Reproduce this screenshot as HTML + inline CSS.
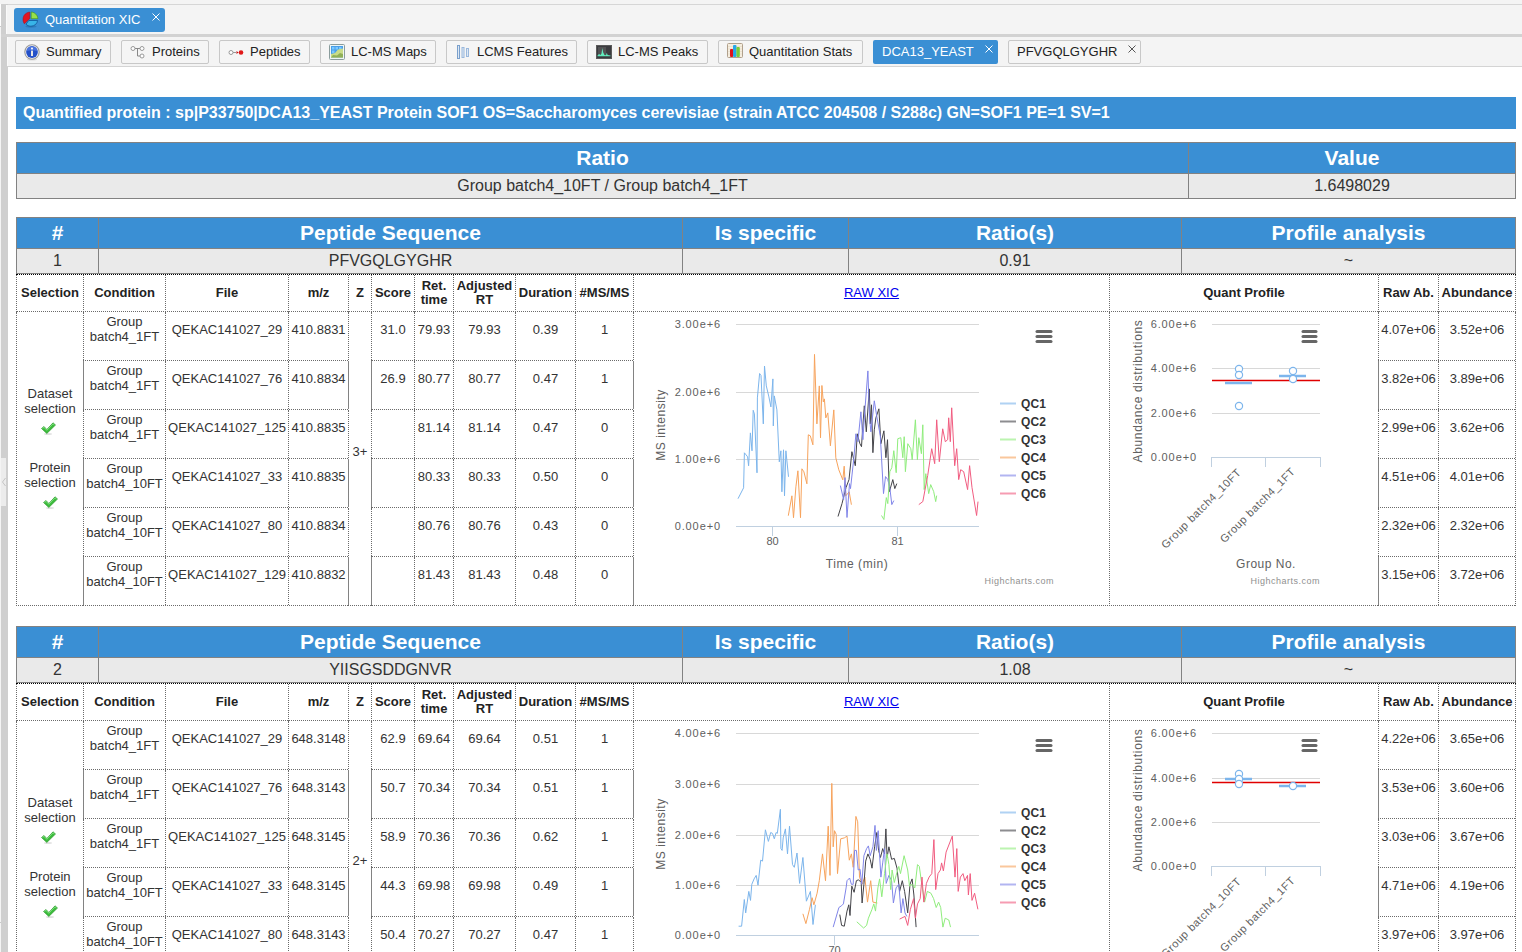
<!DOCTYPE html><html><head><meta charset="utf-8"><style>
html,body{margin:0;padding:0}
body{width:1522px;height:952px;overflow:hidden;position:relative;background:#f4f4f4;font-family:"Liberation Sans", sans-serif;}
.c{position:absolute;display:flex;align-items:center;text-align:center;white-space:nowrap;line-height:1.15}
.t{position:absolute;white-space:nowrap;line-height:1}
</style></head><body>
<div style="position:absolute;left:0px;top:0px;width:1522px;height:4px;background:#f4f4f4"></div>
<div style="position:absolute;left:1px;top:4px;width:1521px;height:1px;background:#d6d6d6"></div>
<div style="position:absolute;left:1px;top:4px;width:7px;height:948px;background:#cfcfcf"></div>
<div style="position:absolute;left:6px;top:5px;width:1516px;height:29px;background:#f4f4f4"></div>
<div style="position:absolute;left:6px;top:5px;width:1px;height:29px;background:#fafafa"></div>
<div style="position:absolute;left:1px;top:34px;width:1521px;height:3px;background:#d2d2d2"></div>
<div style="position:absolute;left:7px;top:37px;width:1515px;height:29px;background:#f4f4f4"></div>
<div style="position:absolute;left:7px;top:37px;width:1px;height:29px;background:#fafafa"></div>
<div style="position:absolute;left:7px;top:66px;width:1515px;height:1px;background:#d4d4d4"></div>
<div style="position:absolute;left:8px;top:67px;width:1514px;height:885px;background:#fff"></div>
<div style="position:absolute;left:0px;top:4px;width:1px;height:22px;background:#fff"></div>
<div style="position:absolute;left:0px;top:26px;width:1px;height:1px;background:#c8c8c8"></div>
<div style="position:absolute;left:0px;top:922px;width:1px;height:1px;background:#c8c8c8"></div>
<div style="position:absolute;left:1px;top:458px;width:5px;height:48px;background:#ececec"></div>
<svg style="position:absolute;left:1px;top:476px" width="6" height="12" viewBox="0 0 6 12"><path d="M4.5 2 L1.5 6 L4.5 10" stroke="#c4c4c4" stroke-width="1" fill="none"/></svg>
<div style="position:absolute;left:14px;top:8px;width:151px;height:24px;background:#3a8fd4;border-radius:3px"></div>
<svg style="position:absolute;left:22px;top:11px" width="17" height="17" viewBox="0 0 17 17">
<ellipse cx="9" cy="15.6" rx="5.5" ry="1.1" fill="#1a5a90" opacity=".35"/>
<path d="M7.7 1 L7.7 7.7 L2.3 12.8 C0.6 10.5 0.6 7 2 4.6 C3.2 2.6 5.3 1.3 7.7 1Z" fill="#e5141f" stroke="#b00010" stroke-width=".5"/>
<path d="M9.2 1 L9.2 7.7 L15.9 7.7 C15.7 4.2 12.8 1.2 9.2 1Z" fill="#98e04a" stroke="#3a9010" stroke-width=".6"/>
<path d="M4 13.2 L6.8 9.5 L15.6 9.5 C15.2 12.8 12.4 15.2 8.9 15.2 C7 15.2 5.2 14.5 4 13.2Z" fill="#38b4e8" stroke="#0a4a90" stroke-width=".7"/>
</svg>
<div class="t" style="left:45px;top:13px;font-size:13px;color:#fff">Quantitation XIC</div>
<svg style="position:absolute;left:151px;top:12px" width="10" height="10" viewBox="0 0 10 10"><path d="M1.5 1.5 L8.5 8.5 M8.5 1.5 L1.5 8.5" stroke="#fff" stroke-width="1"/></svg>
<div style="position:absolute;left:15px;top:40px;width:96px;height:24px;box-sizing:border-box;background:#f5f5f5;border:1px solid #c8c8c8;border-radius:2px"></div>
<svg style="position:absolute;left:24px;top:44px" width="16" height="17" viewBox="0 0 16 17"><ellipse cx="8" cy="15.5" rx="5" ry="1" fill="#000" opacity=".1"/><circle cx="8" cy="8" r="7.2" fill="#f8f8f8" stroke="#999" stroke-width="1.1"/><circle cx="8" cy="8" r="5.9" fill="#2450c8"/><path d="M2.6 7 A5.5 5.5 0 0 1 13.4 7 Q8 5.5 2.6 7Z" fill="#6a90f0" opacity=".55"/><rect x="7.1" y="3.6" width="1.8" height="1.8" fill="#fff"/><rect x="7.1" y="6.6" width="1.8" height="5.4" fill="#fff8e8"/></svg>
<div class="t" style="left:46px;top:45px;font-size:13px;color:#222">Summary</div>
<div style="position:absolute;left:121px;top:40px;width:88px;height:24px;box-sizing:border-box;background:#f5f5f5;border:1px solid #c8c8c8;border-radius:2px"></div>
<svg style="position:absolute;left:130px;top:44px" width="16" height="16" viewBox="0 0 16 16"><path d="M3.5 4.5 H11 M7.5 4.5 V12 H11" stroke="#888" stroke-width="1" fill="none"/><circle cx="3" cy="4.5" r="2" fill="#fff" stroke="#999"/><circle cx="12" cy="4.5" r="2" fill="#fff" stroke="#999"/><circle cx="12" cy="12" r="2" fill="#fff" stroke="#999"/></svg>
<div class="t" style="left:152px;top:45px;font-size:13px;color:#222">Proteins</div>
<div style="position:absolute;left:219px;top:40px;width:91px;height:24px;box-sizing:border-box;background:#f5f5f5;border:1px solid #c8c8c8;border-radius:2px"></div>
<svg style="position:absolute;left:228px;top:44px" width="16" height="16" viewBox="0 0 16 16"><circle cx="3" cy="8.5" r="2" fill="#fff" stroke="#999"/><path d="M5 8.5 H8" stroke="#999"/><path d="M8.5 7 L10.5 8.5 L8.5 10 Z" fill="#c01010"/><circle cx="13" cy="8.5" r="2.3" fill="#e01818"/></svg>
<div class="t" style="left:250px;top:45px;font-size:13px;color:#222">Peptides</div>
<div style="position:absolute;left:320px;top:40px;width:116px;height:24px;box-sizing:border-box;background:#f5f5f5;border:1px solid #c8c8c8;border-radius:2px"></div>
<svg style="position:absolute;left:329px;top:44px" width="16" height="16" viewBox="0 0 16 16"><rect x="0.5" y="0.5" width="15" height="15" rx="1" fill="#eef6f6" stroke="#8a9c9c" stroke-width="1"/><rect x="2" y="2" width="12" height="11.5" fill="#4a9ee8"/><rect x="3" y="3" width="2.5" height="2.5" fill="#78c8ff"/><rect x="6.5" y="3" width="2.5" height="2.5" fill="#78c8ff"/><rect x="10" y="3" width="2.5" height="2.5" fill="#78c8ff"/><rect x="3" y="6.5" width="2.5" height="2.5" fill="#78c8ff"/><path d="M2 13.5 L2 10 L6 9 L9 5.5 L14 4.5 L14 13.5Z" fill="#c8dc88"/><path d="M2 13.5 L4 11 L8 11.5 L11 9 L14 10 L14 13.5Z" fill="#90b058"/></svg>
<div class="t" style="left:351px;top:45px;font-size:13px;color:#222">LC-MS Maps</div>
<div style="position:absolute;left:446px;top:40px;width:131px;height:24px;box-sizing:border-box;background:#f5f5f5;border:1px solid #c8c8c8;border-radius:2px"></div>
<svg style="position:absolute;left:455px;top:44px" width="16" height="16" viewBox="0 0 16 16"><rect x="2.5" y="1.5" width="2" height="13" fill="#dde8f4" stroke="#7aa0cc"/><rect x="7" y="3.5" width="2" height="10" fill="#dde8f4" stroke="#9ab8dc"/><rect x="11.5" y="4.5" width="2" height="8" fill="#dde8f4" stroke="#9ab8dc"/></svg>
<div class="t" style="left:477px;top:45px;font-size:13px;color:#222">LCMS Features</div>
<div style="position:absolute;left:587px;top:40px;width:121px;height:24px;box-sizing:border-box;background:#f5f5f5;border:1px solid #c8c8c8;border-radius:2px"></div>
<svg style="position:absolute;left:596px;top:45px" width="17" height="15" viewBox="0 0 17 15"><rect x="0.5" y="0.5" width="15" height="13" fill="#3c3c40" stroke="#5a5a5a" stroke-width="1"/><rect x="2" y="2" width="8" height="9" fill="#6a6a6a" opacity=".5"/><path d="M1.5 10.5 L3 9 L4.5 10 L5.5 8.5 L6.3 3 L7.2 7.5 L8.5 10 L10 10.2 L10.8 7.8 L11.6 10 L14.5 10.5 L14.5 11.3 L1.5 11.3Z" fill="#62eebf"/></svg>
<div class="t" style="left:618px;top:45px;font-size:13px;color:#222">LC-MS Peaks</div>
<div style="position:absolute;left:718px;top:40px;width:145px;height:24px;box-sizing:border-box;background:#f5f5f5;border:1px solid #c8c8c8;border-radius:2px"></div>
<svg style="position:absolute;left:727px;top:43px" width="17" height="16" viewBox="0 0 17 16"><rect x="0.5" y="0.5" width="15" height="14" rx="1" fill="#f6eee0" stroke="#b0a08c" stroke-width="1"/><path d="M1 3.5H15M1 6H15M1 8.5H15M1 11H15" stroke="#e6dcc8" stroke-width=".7"/><rect x="3" y="6" width="3.2" height="8" rx="1" fill="#e0101a"/><rect x="6" y="2" width="3.5" height="12" rx="1" fill="#28a8e8"/><rect x="9.4" y="4" width="3.4" height="10" rx="1" fill="#78cc38"/></svg>
<div class="t" style="left:749px;top:45px;font-size:13px;color:#222">Quantitation Stats</div>
<div style="position:absolute;left:873px;top:40px;width:125px;height:24px;box-sizing:border-box;background:#3a8fd4;border-radius:2px"></div>
<div class="t" style="left:882px;top:45px;font-size:13px;color:#fff">DCA13_YEAST</div>
<svg style="position:absolute;left:984px;top:44px" width="10" height="10" viewBox="0 0 10 10"><path d="M1.5 1.5 L8.5 8.5 M8.5 1.5 L1.5 8.5" stroke="#fff" stroke-width="1"/></svg>
<div style="position:absolute;left:1008px;top:40px;width:133px;height:24px;box-sizing:border-box;background:#f5f5f5;border:1px solid #c8c8c8;border-radius:2px"></div>
<div class="t" style="left:1017px;top:45px;font-size:13px;color:#222">PFVGQLGYGHR</div>
<svg style="position:absolute;left:1127px;top:44px" width="10" height="10" viewBox="0 0 10 10"><path d="M1.5 1.5 L8.5 8.5 M8.5 1.5 L1.5 8.5" stroke="#555" stroke-width="1"/></svg>
<div style="position:absolute;left:16px;top:97px;width:1500px;height:32px;background:#3a8fd4"></div>
<div class="t" style="left:23px;top:105px;font-size:16px;font-weight:bold;color:#fff">Quantified protein : sp|P33750|DCA13_YEAST Protein SOF1 OS=Saccharomyces cerevisiae (strain ATCC 204508 / S288c) GN=SOF1 PE=1 SV=1</div>
<div style="position:absolute;left:16px;top:142px;width:1500px;height:31px;background:#3a8fd4"></div>
<div style="position:absolute;left:16px;top:173px;width:1500px;height:25px;background:#eaeaea"></div>
<div style="position:absolute;left:16px;top:142px;width:1500px;height:1px;background:#828282"></div>
<div style="position:absolute;left:16px;top:173px;width:1500px;height:1px;background:#828282"></div>
<div style="position:absolute;left:16px;top:198px;width:1500px;height:1px;background:#828282"></div>
<div style="position:absolute;left:16px;top:142px;width:1px;height:57px;background:#828282"></div>
<div style="position:absolute;left:1188px;top:142px;width:1px;height:57px;background:#828282"></div>
<div style="position:absolute;left:1515px;top:142px;width:1px;height:57px;background:#828282"></div>
<div class="c" style="left:17px;top:143px;width:1171px;height:30px;justify-content:center;font-size:21px;font-weight:bold;color:#fff">Ratio</div>
<div class="c" style="left:17px;top:174px;width:1171px;height:24px;justify-content:center;font-size:16px;color:#333">Group batch4_10FT / Group batch4_1FT</div>
<div class="c" style="left:1189px;top:143px;width:326px;height:30px;justify-content:center;font-size:21px;font-weight:bold;color:#fff">Value</div>
<div class="c" style="left:1189px;top:174px;width:326px;height:24px;justify-content:center;font-size:16px;color:#333">1.6498029</div>
<div style="position:absolute;left:16px;top:217px;width:1500px;height:31px;background:#3a8fd4"></div>
<div style="position:absolute;left:16px;top:248px;width:1500px;height:25px;background:#eaeaea"></div>
<div style="position:absolute;left:16px;top:217px;width:1500px;height:1px;background:#828282"></div>
<div style="position:absolute;left:16px;top:248px;width:1500px;height:1px;background:#828282"></div>
<div style="position:absolute;left:16px;top:273px;width:1500px;height:1px;background:#828282"></div>
<div style="position:absolute;left:16px;top:217px;width:1px;height:57px;background:#828282"></div>
<div style="position:absolute;left:98px;top:217px;width:1px;height:57px;background:#828282"></div>
<div style="position:absolute;left:682px;top:217px;width:1px;height:57px;background:#828282"></div>
<div style="position:absolute;left:848px;top:217px;width:1px;height:57px;background:#828282"></div>
<div style="position:absolute;left:1181px;top:217px;width:1px;height:57px;background:#828282"></div>
<div style="position:absolute;left:1515px;top:217px;width:1px;height:57px;background:#828282"></div>
<div class="c" style="left:17px;top:218px;width:81px;height:30px;justify-content:center;font-size:21px;font-weight:bold;color:#fff">#</div>
<div class="c" style="left:17px;top:249px;width:81px;height:24px;justify-content:center;font-size:16px;color:#333">1</div>
<div class="c" style="left:99px;top:218px;width:583px;height:30px;justify-content:center;font-size:21px;font-weight:bold;color:#fff">Peptide Sequence</div>
<div class="c" style="left:99px;top:249px;width:583px;height:24px;justify-content:center;font-size:16px;color:#333">PFVGQLGYGHR</div>
<div class="c" style="left:683px;top:218px;width:165px;height:30px;justify-content:center;font-size:21px;font-weight:bold;color:#fff">Is specific</div>
<div class="c" style="left:683px;top:249px;width:165px;height:24px;justify-content:center;font-size:16px;color:#333"></div>
<div class="c" style="left:849px;top:218px;width:332px;height:30px;justify-content:center;font-size:21px;font-weight:bold;color:#fff">Ratio(s)</div>
<div class="c" style="left:849px;top:249px;width:332px;height:24px;justify-content:center;font-size:16px;color:#333">0.91</div>
<div class="c" style="left:1182px;top:218px;width:333px;height:30px;justify-content:center;font-size:21px;font-weight:bold;color:#fff">Profile analysis</div>
<div class="c" style="left:1182px;top:249px;width:333px;height:24px;justify-content:center;font-size:16px;color:#333">~</div>
<div style="position:absolute;left:16px;top:274px;width:1500px;height:0;border-top:1px dotted #000"></div>
<div class="c" style="left:17px;top:275px;width:66px;height:36px;justify-content:center;font-size:13px;font-weight:bold;color:#222;line-height:14px">Selection</div>
<div class="c" style="left:84px;top:275px;width:81px;height:36px;justify-content:center;font-size:13px;font-weight:bold;color:#222;line-height:14px">Condition</div>
<div class="c" style="left:166px;top:275px;width:122px;height:36px;justify-content:center;font-size:13px;font-weight:bold;color:#222;line-height:14px">File</div>
<div class="c" style="left:289px;top:275px;width:59px;height:36px;justify-content:center;font-size:13px;font-weight:bold;color:#222;line-height:14px">m/z</div>
<div class="c" style="left:349px;top:275px;width:22px;height:36px;justify-content:center;font-size:13px;font-weight:bold;color:#222;line-height:14px">Z</div>
<div class="c" style="left:372px;top:275px;width:42px;height:36px;justify-content:center;font-size:13px;font-weight:bold;color:#222;line-height:14px">Score</div>
<div class="c" style="left:415px;top:275px;width:38px;height:36px;justify-content:center;font-size:13px;font-weight:bold;color:#222;line-height:14px">Ret.<br>time</div>
<div class="c" style="left:454px;top:275px;width:61px;height:36px;justify-content:center;font-size:13px;font-weight:bold;color:#222;line-height:14px">Adjusted<br>RT</div>
<div class="c" style="left:516px;top:275px;width:59px;height:36px;justify-content:center;font-size:13px;font-weight:bold;color:#222;line-height:14px">Duration</div>
<div class="c" style="left:576px;top:275px;width:57px;height:36px;justify-content:center;font-size:13px;font-weight:bold;color:#222;line-height:14px">#MS/MS</div>
<div class="c" style="left:634px;top:275px;width:475px;height:36px;justify-content:center;font-size:13px;font-weight:bold;color:#222;line-height:14px"><span style="color:#0000ee;text-decoration:underline;font-weight:normal">RAW XIC</span></div>
<div class="c" style="left:1110px;top:275px;width:268px;height:36px;justify-content:center;font-size:13px;font-weight:bold;color:#222;line-height:14px">Quant Profile</div>
<div class="c" style="left:1379px;top:275px;width:59px;height:36px;justify-content:center;font-size:13px;font-weight:bold;color:#222;line-height:14px">Raw Ab.</div>
<div class="c" style="left:1439px;top:275px;width:76px;height:36px;justify-content:center;font-size:13px;font-weight:bold;color:#222;line-height:14px">Abundance</div>
<div style="position:absolute;left:16px;top:275px;width:0;height:37px;border-left:1px dotted #6a6a6a"></div>
<div style="position:absolute;left:83px;top:275px;width:0;height:37px;border-left:1px dotted #6a6a6a"></div>
<div style="position:absolute;left:165px;top:275px;width:0;height:37px;border-left:1px dotted #6a6a6a"></div>
<div style="position:absolute;left:288px;top:275px;width:0;height:37px;border-left:1px dotted #6a6a6a"></div>
<div style="position:absolute;left:348px;top:275px;width:0;height:37px;border-left:1px dotted #6a6a6a"></div>
<div style="position:absolute;left:371px;top:275px;width:0;height:37px;border-left:1px dotted #6a6a6a"></div>
<div style="position:absolute;left:414px;top:275px;width:0;height:37px;border-left:1px dotted #6a6a6a"></div>
<div style="position:absolute;left:453px;top:275px;width:0;height:37px;border-left:1px dotted #6a6a6a"></div>
<div style="position:absolute;left:515px;top:275px;width:0;height:37px;border-left:1px dotted #6a6a6a"></div>
<div style="position:absolute;left:575px;top:275px;width:0;height:37px;border-left:1px dotted #6a6a6a"></div>
<div style="position:absolute;left:633px;top:275px;width:0;height:37px;border-left:1px dotted #6a6a6a"></div>
<div style="position:absolute;left:1109px;top:275px;width:0;height:37px;border-left:1px dotted #6a6a6a"></div>
<div style="position:absolute;left:1378px;top:275px;width:0;height:37px;border-left:1px dotted #6a6a6a"></div>
<div style="position:absolute;left:1438px;top:275px;width:0;height:37px;border-left:1px dotted #6a6a6a"></div>
<div style="position:absolute;left:1515px;top:275px;width:0;height:37px;border-left:1px dotted #6a6a6a"></div>
<div style="position:absolute;left:16px;top:311px;width:1500px;height:0;border-top:1px dotted #6a6a6a"></div>
<div class="c" style="left:84px;top:311px;width:81px;height:36px;justify-content:center;font-size:13px;color:#333;line-height:15px">Group<br>batch4_1FT</div>
<div class="c" style="left:166px;top:311px;width:122px;height:36px;justify-content:center;font-size:13px;color:#333;line-height:15px">QEKAC141027_29</div>
<div class="c" style="left:289px;top:311px;width:59px;height:36px;justify-content:center;font-size:13px;color:#333;line-height:15px">410.8831</div>
<div class="c" style="left:372px;top:311px;width:42px;height:36px;justify-content:center;font-size:13px;color:#333;line-height:15px">31.0</div>
<div class="c" style="left:415px;top:311px;width:38px;height:36px;justify-content:center;font-size:13px;color:#333;line-height:15px">79.93</div>
<div class="c" style="left:454px;top:311px;width:61px;height:36px;justify-content:center;font-size:13px;color:#333;line-height:15px">79.93</div>
<div class="c" style="left:516px;top:311px;width:59px;height:36px;justify-content:center;font-size:13px;color:#333;line-height:15px">0.39</div>
<div class="c" style="left:576px;top:311px;width:57px;height:36px;justify-content:center;font-size:13px;color:#333;line-height:15px">1</div>
<div class="c" style="left:1379px;top:311px;width:59px;height:36px;justify-content:center;font-size:13px;color:#333;line-height:15px">4.07e+06</div>
<div class="c" style="left:1439px;top:311px;width:76px;height:36px;justify-content:center;font-size:13px;color:#333;line-height:15px">3.52e+06</div>
<div style="position:absolute;left:83px;top:360px;width:265px;height:0;border-top:1px dotted #6a6a6a"></div>
<div style="position:absolute;left:371px;top:360px;width:262px;height:0;border-top:1px dotted #6a6a6a"></div>
<div style="position:absolute;left:1378px;top:360px;width:137px;height:0;border-top:1px dotted #6a6a6a"></div>
<div style="position:absolute;left:83px;top:312px;width:0;height:48px;border-left:1px dotted #6a6a6a"></div>
<div style="position:absolute;left:348px;top:312px;width:0;height:48px;border-left:1px dotted #6a6a6a"></div>
<div style="position:absolute;left:371px;top:312px;width:0;height:48px;border-left:1px dotted #6a6a6a"></div>
<div style="position:absolute;left:633px;top:312px;width:0;height:48px;border-left:1px dotted #6a6a6a"></div>
<div style="position:absolute;left:1378px;top:312px;width:0;height:48px;border-left:1px dotted #6a6a6a"></div>
<div style="position:absolute;left:165px;top:312px;width:0;height:48px;border-left:1px dotted #6a6a6a"></div>
<div style="position:absolute;left:288px;top:312px;width:0;height:48px;border-left:1px dotted #6a6a6a"></div>
<div style="position:absolute;left:414px;top:312px;width:0;height:48px;border-left:1px dotted #6a6a6a"></div>
<div style="position:absolute;left:453px;top:312px;width:0;height:48px;border-left:1px dotted #6a6a6a"></div>
<div style="position:absolute;left:515px;top:312px;width:0;height:48px;border-left:1px dotted #6a6a6a"></div>
<div style="position:absolute;left:575px;top:312px;width:0;height:48px;border-left:1px dotted #6a6a6a"></div>
<div style="position:absolute;left:1438px;top:312px;width:0;height:48px;border-left:1px dotted #6a6a6a"></div>
<div class="c" style="left:84px;top:360px;width:81px;height:36px;justify-content:center;font-size:13px;color:#333;line-height:15px">Group<br>batch4_1FT</div>
<div class="c" style="left:166px;top:360px;width:122px;height:36px;justify-content:center;font-size:13px;color:#333;line-height:15px">QEKAC141027_76</div>
<div class="c" style="left:289px;top:360px;width:59px;height:36px;justify-content:center;font-size:13px;color:#333;line-height:15px">410.8834</div>
<div class="c" style="left:372px;top:360px;width:42px;height:36px;justify-content:center;font-size:13px;color:#333;line-height:15px">26.9</div>
<div class="c" style="left:415px;top:360px;width:38px;height:36px;justify-content:center;font-size:13px;color:#333;line-height:15px">80.77</div>
<div class="c" style="left:454px;top:360px;width:61px;height:36px;justify-content:center;font-size:13px;color:#333;line-height:15px">80.77</div>
<div class="c" style="left:516px;top:360px;width:59px;height:36px;justify-content:center;font-size:13px;color:#333;line-height:15px">0.47</div>
<div class="c" style="left:576px;top:360px;width:57px;height:36px;justify-content:center;font-size:13px;color:#333;line-height:15px">1</div>
<div class="c" style="left:1379px;top:360px;width:59px;height:36px;justify-content:center;font-size:13px;color:#333;line-height:15px">3.82e+06</div>
<div class="c" style="left:1439px;top:360px;width:76px;height:36px;justify-content:center;font-size:13px;color:#333;line-height:15px">3.89e+06</div>
<div style="position:absolute;left:83px;top:409px;width:265px;height:0;border-top:1px dotted #6a6a6a"></div>
<div style="position:absolute;left:371px;top:409px;width:262px;height:0;border-top:1px dotted #6a6a6a"></div>
<div style="position:absolute;left:1378px;top:409px;width:137px;height:0;border-top:1px dotted #6a6a6a"></div>
<div style="position:absolute;left:83px;top:361px;width:1px;height:48px;background:#828282"></div>
<div style="position:absolute;left:348px;top:361px;width:1px;height:48px;background:#828282"></div>
<div style="position:absolute;left:371px;top:361px;width:1px;height:48px;background:#828282"></div>
<div style="position:absolute;left:633px;top:361px;width:1px;height:48px;background:#828282"></div>
<div style="position:absolute;left:1378px;top:361px;width:1px;height:48px;background:#828282"></div>
<div style="position:absolute;left:165px;top:361px;width:0;height:48px;border-left:1px dotted #6a6a6a"></div>
<div style="position:absolute;left:288px;top:361px;width:0;height:48px;border-left:1px dotted #6a6a6a"></div>
<div style="position:absolute;left:414px;top:361px;width:0;height:48px;border-left:1px dotted #6a6a6a"></div>
<div style="position:absolute;left:453px;top:361px;width:0;height:48px;border-left:1px dotted #6a6a6a"></div>
<div style="position:absolute;left:515px;top:361px;width:0;height:48px;border-left:1px dotted #6a6a6a"></div>
<div style="position:absolute;left:575px;top:361px;width:0;height:48px;border-left:1px dotted #6a6a6a"></div>
<div style="position:absolute;left:1438px;top:361px;width:0;height:48px;border-left:1px dotted #6a6a6a"></div>
<div class="c" style="left:84px;top:409px;width:81px;height:36px;justify-content:center;font-size:13px;color:#333;line-height:15px">Group<br>batch4_1FT</div>
<div class="c" style="left:166px;top:409px;width:122px;height:36px;justify-content:center;font-size:13px;color:#333;line-height:15px">QEKAC141027_125</div>
<div class="c" style="left:289px;top:409px;width:59px;height:36px;justify-content:center;font-size:13px;color:#333;line-height:15px">410.8835</div>
<div class="c" style="left:372px;top:409px;width:42px;height:36px;justify-content:center;font-size:13px;color:#333;line-height:15px"></div>
<div class="c" style="left:415px;top:409px;width:38px;height:36px;justify-content:center;font-size:13px;color:#333;line-height:15px">81.14</div>
<div class="c" style="left:454px;top:409px;width:61px;height:36px;justify-content:center;font-size:13px;color:#333;line-height:15px">81.14</div>
<div class="c" style="left:516px;top:409px;width:59px;height:36px;justify-content:center;font-size:13px;color:#333;line-height:15px">0.47</div>
<div class="c" style="left:576px;top:409px;width:57px;height:36px;justify-content:center;font-size:13px;color:#333;line-height:15px">0</div>
<div class="c" style="left:1379px;top:409px;width:59px;height:36px;justify-content:center;font-size:13px;color:#333;line-height:15px">2.99e+06</div>
<div class="c" style="left:1439px;top:409px;width:76px;height:36px;justify-content:center;font-size:13px;color:#333;line-height:15px">3.62e+06</div>
<div style="position:absolute;left:83px;top:458px;width:265px;height:0;border-top:1px dotted #6a6a6a"></div>
<div style="position:absolute;left:371px;top:458px;width:262px;height:0;border-top:1px dotted #6a6a6a"></div>
<div style="position:absolute;left:1378px;top:458px;width:137px;height:0;border-top:1px dotted #6a6a6a"></div>
<div style="position:absolute;left:83px;top:410px;width:0;height:48px;border-left:1px dotted #6a6a6a"></div>
<div style="position:absolute;left:348px;top:410px;width:0;height:48px;border-left:1px dotted #6a6a6a"></div>
<div style="position:absolute;left:371px;top:410px;width:0;height:48px;border-left:1px dotted #6a6a6a"></div>
<div style="position:absolute;left:633px;top:410px;width:0;height:48px;border-left:1px dotted #6a6a6a"></div>
<div style="position:absolute;left:1378px;top:410px;width:0;height:48px;border-left:1px dotted #6a6a6a"></div>
<div style="position:absolute;left:165px;top:410px;width:0;height:48px;border-left:1px dotted #6a6a6a"></div>
<div style="position:absolute;left:288px;top:410px;width:0;height:48px;border-left:1px dotted #6a6a6a"></div>
<div style="position:absolute;left:414px;top:410px;width:0;height:48px;border-left:1px dotted #6a6a6a"></div>
<div style="position:absolute;left:453px;top:410px;width:0;height:48px;border-left:1px dotted #6a6a6a"></div>
<div style="position:absolute;left:515px;top:410px;width:0;height:48px;border-left:1px dotted #6a6a6a"></div>
<div style="position:absolute;left:575px;top:410px;width:0;height:48px;border-left:1px dotted #6a6a6a"></div>
<div style="position:absolute;left:1438px;top:410px;width:0;height:48px;border-left:1px dotted #6a6a6a"></div>
<div class="c" style="left:84px;top:458px;width:81px;height:36px;justify-content:center;font-size:13px;color:#333;line-height:15px">Group<br>batch4_10FT</div>
<div class="c" style="left:166px;top:458px;width:122px;height:36px;justify-content:center;font-size:13px;color:#333;line-height:15px">QEKAC141027_33</div>
<div class="c" style="left:289px;top:458px;width:59px;height:36px;justify-content:center;font-size:13px;color:#333;line-height:15px">410.8835</div>
<div class="c" style="left:372px;top:458px;width:42px;height:36px;justify-content:center;font-size:13px;color:#333;line-height:15px"></div>
<div class="c" style="left:415px;top:458px;width:38px;height:36px;justify-content:center;font-size:13px;color:#333;line-height:15px">80.33</div>
<div class="c" style="left:454px;top:458px;width:61px;height:36px;justify-content:center;font-size:13px;color:#333;line-height:15px">80.33</div>
<div class="c" style="left:516px;top:458px;width:59px;height:36px;justify-content:center;font-size:13px;color:#333;line-height:15px">0.50</div>
<div class="c" style="left:576px;top:458px;width:57px;height:36px;justify-content:center;font-size:13px;color:#333;line-height:15px">0</div>
<div class="c" style="left:1379px;top:458px;width:59px;height:36px;justify-content:center;font-size:13px;color:#333;line-height:15px">4.51e+06</div>
<div class="c" style="left:1439px;top:458px;width:76px;height:36px;justify-content:center;font-size:13px;color:#333;line-height:15px">4.01e+06</div>
<div style="position:absolute;left:83px;top:507px;width:265px;height:0;border-top:1px dotted #6a6a6a"></div>
<div style="position:absolute;left:371px;top:507px;width:262px;height:0;border-top:1px dotted #6a6a6a"></div>
<div style="position:absolute;left:1378px;top:507px;width:137px;height:0;border-top:1px dotted #6a6a6a"></div>
<div style="position:absolute;left:83px;top:459px;width:1px;height:48px;background:#828282"></div>
<div style="position:absolute;left:348px;top:459px;width:1px;height:48px;background:#828282"></div>
<div style="position:absolute;left:371px;top:459px;width:1px;height:48px;background:#828282"></div>
<div style="position:absolute;left:633px;top:459px;width:1px;height:48px;background:#828282"></div>
<div style="position:absolute;left:1378px;top:459px;width:1px;height:48px;background:#828282"></div>
<div style="position:absolute;left:165px;top:459px;width:0;height:48px;border-left:1px dotted #6a6a6a"></div>
<div style="position:absolute;left:288px;top:459px;width:0;height:48px;border-left:1px dotted #6a6a6a"></div>
<div style="position:absolute;left:414px;top:459px;width:0;height:48px;border-left:1px dotted #6a6a6a"></div>
<div style="position:absolute;left:453px;top:459px;width:0;height:48px;border-left:1px dotted #6a6a6a"></div>
<div style="position:absolute;left:515px;top:459px;width:0;height:48px;border-left:1px dotted #6a6a6a"></div>
<div style="position:absolute;left:575px;top:459px;width:0;height:48px;border-left:1px dotted #6a6a6a"></div>
<div style="position:absolute;left:1438px;top:459px;width:0;height:48px;border-left:1px dotted #6a6a6a"></div>
<div class="c" style="left:84px;top:507px;width:81px;height:36px;justify-content:center;font-size:13px;color:#333;line-height:15px">Group<br>batch4_10FT</div>
<div class="c" style="left:166px;top:507px;width:122px;height:36px;justify-content:center;font-size:13px;color:#333;line-height:15px">QEKAC141027_80</div>
<div class="c" style="left:289px;top:507px;width:59px;height:36px;justify-content:center;font-size:13px;color:#333;line-height:15px">410.8834</div>
<div class="c" style="left:372px;top:507px;width:42px;height:36px;justify-content:center;font-size:13px;color:#333;line-height:15px"></div>
<div class="c" style="left:415px;top:507px;width:38px;height:36px;justify-content:center;font-size:13px;color:#333;line-height:15px">80.76</div>
<div class="c" style="left:454px;top:507px;width:61px;height:36px;justify-content:center;font-size:13px;color:#333;line-height:15px">80.76</div>
<div class="c" style="left:516px;top:507px;width:59px;height:36px;justify-content:center;font-size:13px;color:#333;line-height:15px">0.43</div>
<div class="c" style="left:576px;top:507px;width:57px;height:36px;justify-content:center;font-size:13px;color:#333;line-height:15px">0</div>
<div class="c" style="left:1379px;top:507px;width:59px;height:36px;justify-content:center;font-size:13px;color:#333;line-height:15px">2.32e+06</div>
<div class="c" style="left:1439px;top:507px;width:76px;height:36px;justify-content:center;font-size:13px;color:#333;line-height:15px">2.32e+06</div>
<div style="position:absolute;left:83px;top:556px;width:265px;height:0;border-top:1px dotted #6a6a6a"></div>
<div style="position:absolute;left:371px;top:556px;width:262px;height:0;border-top:1px dotted #6a6a6a"></div>
<div style="position:absolute;left:1378px;top:556px;width:137px;height:0;border-top:1px dotted #6a6a6a"></div>
<div style="position:absolute;left:83px;top:508px;width:0;height:48px;border-left:1px dotted #6a6a6a"></div>
<div style="position:absolute;left:348px;top:508px;width:0;height:48px;border-left:1px dotted #6a6a6a"></div>
<div style="position:absolute;left:371px;top:508px;width:0;height:48px;border-left:1px dotted #6a6a6a"></div>
<div style="position:absolute;left:633px;top:508px;width:0;height:48px;border-left:1px dotted #6a6a6a"></div>
<div style="position:absolute;left:1378px;top:508px;width:0;height:48px;border-left:1px dotted #6a6a6a"></div>
<div style="position:absolute;left:165px;top:508px;width:0;height:48px;border-left:1px dotted #6a6a6a"></div>
<div style="position:absolute;left:288px;top:508px;width:0;height:48px;border-left:1px dotted #6a6a6a"></div>
<div style="position:absolute;left:414px;top:508px;width:0;height:48px;border-left:1px dotted #6a6a6a"></div>
<div style="position:absolute;left:453px;top:508px;width:0;height:48px;border-left:1px dotted #6a6a6a"></div>
<div style="position:absolute;left:515px;top:508px;width:0;height:48px;border-left:1px dotted #6a6a6a"></div>
<div style="position:absolute;left:575px;top:508px;width:0;height:48px;border-left:1px dotted #6a6a6a"></div>
<div style="position:absolute;left:1438px;top:508px;width:0;height:48px;border-left:1px dotted #6a6a6a"></div>
<div class="c" style="left:84px;top:556px;width:81px;height:36px;justify-content:center;font-size:13px;color:#333;line-height:15px">Group<br>batch4_10FT</div>
<div class="c" style="left:166px;top:556px;width:122px;height:36px;justify-content:center;font-size:13px;color:#333;line-height:15px">QEKAC141027_129</div>
<div class="c" style="left:289px;top:556px;width:59px;height:36px;justify-content:center;font-size:13px;color:#333;line-height:15px">410.8832</div>
<div class="c" style="left:372px;top:556px;width:42px;height:36px;justify-content:center;font-size:13px;color:#333;line-height:15px"></div>
<div class="c" style="left:415px;top:556px;width:38px;height:36px;justify-content:center;font-size:13px;color:#333;line-height:15px">81.43</div>
<div class="c" style="left:454px;top:556px;width:61px;height:36px;justify-content:center;font-size:13px;color:#333;line-height:15px">81.43</div>
<div class="c" style="left:516px;top:556px;width:59px;height:36px;justify-content:center;font-size:13px;color:#333;line-height:15px">0.48</div>
<div class="c" style="left:576px;top:556px;width:57px;height:36px;justify-content:center;font-size:13px;color:#333;line-height:15px">0</div>
<div class="c" style="left:1379px;top:556px;width:59px;height:36px;justify-content:center;font-size:13px;color:#333;line-height:15px">3.15e+06</div>
<div class="c" style="left:1439px;top:556px;width:76px;height:36px;justify-content:center;font-size:13px;color:#333;line-height:15px">3.72e+06</div>
<div style="position:absolute;left:83px;top:605px;width:265px;height:0;border-top:1px dotted #6a6a6a"></div>
<div style="position:absolute;left:371px;top:605px;width:262px;height:0;border-top:1px dotted #6a6a6a"></div>
<div style="position:absolute;left:1378px;top:605px;width:137px;height:0;border-top:1px dotted #6a6a6a"></div>
<div style="position:absolute;left:83px;top:557px;width:1px;height:48px;background:#828282"></div>
<div style="position:absolute;left:348px;top:557px;width:1px;height:48px;background:#828282"></div>
<div style="position:absolute;left:371px;top:557px;width:1px;height:48px;background:#828282"></div>
<div style="position:absolute;left:633px;top:557px;width:1px;height:48px;background:#828282"></div>
<div style="position:absolute;left:1378px;top:557px;width:1px;height:48px;background:#828282"></div>
<div style="position:absolute;left:165px;top:557px;width:0;height:48px;border-left:1px dotted #6a6a6a"></div>
<div style="position:absolute;left:288px;top:557px;width:0;height:48px;border-left:1px dotted #6a6a6a"></div>
<div style="position:absolute;left:414px;top:557px;width:0;height:48px;border-left:1px dotted #6a6a6a"></div>
<div style="position:absolute;left:453px;top:557px;width:0;height:48px;border-left:1px dotted #6a6a6a"></div>
<div style="position:absolute;left:515px;top:557px;width:0;height:48px;border-left:1px dotted #6a6a6a"></div>
<div style="position:absolute;left:575px;top:557px;width:0;height:48px;border-left:1px dotted #6a6a6a"></div>
<div style="position:absolute;left:1438px;top:557px;width:0;height:48px;border-left:1px dotted #6a6a6a"></div>
<div style="position:absolute;left:16px;top:312px;width:0;height:294px;border-left:1px dotted #6a6a6a"></div>
<div style="position:absolute;left:1515px;top:312px;width:0;height:294px;border-left:1px dotted #6a6a6a"></div>
<div style="position:absolute;left:1109px;top:312px;width:0;height:294px;border-left:1px dotted #6a6a6a"></div>
<div style="position:absolute;left:16px;top:605px;width:67px;height:0;border-top:1px dotted #6a6a6a"></div>
<div style="position:absolute;left:348px;top:605px;width:23px;height:0;border-top:1px dotted #6a6a6a"></div>
<div style="position:absolute;left:633px;top:605px;width:745px;height:0;border-top:1px dotted #6a6a6a"></div>
<div class="c" style="left:17px;top:385px;width:66px;height:32px;justify-content:center;font-size:13px;color:#333;line-height:15px">Dataset<br>selection</div>
<svg style="position:absolute;left:41px;top:422px" width="15" height="13" viewBox="0 0 15 13"><ellipse cx="7" cy="12" rx="4" ry="1" fill="#000" opacity=".12"/><path d="M0.5 6.5 L3 4.5 L5.8 7.5 L12 0.8 L14.5 3 L5.8 11.5 Z" fill="#3cbc3c" stroke="#1f8f1f" stroke-width=".6"/><path d="M1.5 6.5 L3 5.3 L5.8 8.3 L12 1.8 L13.5 3" fill="none" stroke="#8fe88f" stroke-width=".8"/></svg>
<div class="c" style="left:17px;top:459px;width:66px;height:32px;justify-content:center;font-size:13px;color:#333;line-height:15px">Protein<br>selection</div>
<svg style="position:absolute;left:43px;top:496px" width="15" height="13" viewBox="0 0 15 13"><ellipse cx="7" cy="12" rx="4" ry="1" fill="#000" opacity=".12"/><path d="M0.5 6.5 L3 4.5 L5.8 7.5 L12 0.8 L14.5 3 L5.8 11.5 Z" fill="#3cbc3c" stroke="#1f8f1f" stroke-width=".6"/><path d="M1.5 6.5 L3 5.3 L5.8 8.3 L12 1.8 L13.5 3" fill="none" stroke="#8fe88f" stroke-width=".8"/></svg>
<div class="c" style="left:349px;top:444px;width:22px;height:16px;justify-content:center;font-size:13px;color:#333">3+</div>
<svg style="position:absolute;left:634px;top:312px;overflow:visible" width="474" height="293" viewBox="634 312 474 293"><path d="M736 324.5 H979" stroke="#d8d8d8" stroke-width="1"/><text x="721" y="328.0" text-anchor="end" font-size="11" letter-spacing="0.9" fill="#606060" font-family="Liberation Sans">3.00e+6</text><path d="M736 392.5 H979" stroke="#d8d8d8" stroke-width="1"/><text x="721" y="396.0" text-anchor="end" font-size="11" letter-spacing="0.9" fill="#606060" font-family="Liberation Sans">2.00e+6</text><path d="M736 459.5 H979" stroke="#d8d8d8" stroke-width="1"/><text x="721" y="463.0" text-anchor="end" font-size="11" letter-spacing="0.9" fill="#606060" font-family="Liberation Sans">1.00e+6</text><text x="721" y="530.0" text-anchor="end" font-size="11" letter-spacing="0.9" fill="#606060" font-family="Liberation Sans">0.00e+0</text><path d="M736 526.5 H979" stroke="#c0d0e0" stroke-width="1"/><path d="M772.5 526 V536" stroke="#c0d0e0" stroke-width="1"/><text x="772.5" y="545" text-anchor="middle" font-size="11" fill="#606060" font-family="Liberation Sans">80</text><path d="M897.5 526 V536" stroke="#c0d0e0" stroke-width="1"/><text x="897.5" y="545" text-anchor="middle" font-size="11" fill="#606060" font-family="Liberation Sans">81</text><text x="857" y="568" text-anchor="middle" font-size="12" letter-spacing="0.55" fill="#606060" font-family="Liberation Sans">Time (min)</text><text transform="translate(665 425.0) rotate(-90)" text-anchor="middle" font-size="12" letter-spacing="0.5" fill="#606060" font-family="Liberation Sans">MS intensity</text><path d="M738.0 498.7 L743.6 487.8 L744.4 452.8 L746.0 454.8 L747.6 456.8 L748.6 465.8 L750.4 432.9 L752.0 450.8 L753.2 410.3 L754.4 413.9 L757.0 472.8 L757.4 397.9 L759.6 373.5 L761.0 375.5 L763.3 423.9 L764.5 366.0 L766.3 385.9 L768.9 396.9 L770.9 406.9 L772.9 378.9 L773.3 425.9 L774.3 395.9 L776.9 409.9 L779.3 461.8 L780.9 450.8 L781.9 491.8 L783.5 449.8 L784.5 495.8 L785.9 450.8 L788.5 476.8" stroke="#7cb5ec" stroke-width="1" fill="none" stroke-linejoin="round"/><path d="M788.3 515.7 L791.9 495.8 L793.5 517.7 L795.9 486.8 L797.9 470.8 L800.5 517.7 L801.9 468.8 L803.9 471.8 L806.9 483.8 L808.3 434.8 L810.3 435.8 L812.9 444.8 L814.5 354.4 L816.9 423.9 L819.3 385.9 L820.5 437.8 L821.9 385.5 L823.3 401.9 L824.4 398.9 L825.8 417.9 L827.8 412.9 L830.4 445.8 L833.8 409.9 L835.8 457.8 L838.8 469.8 L842.8 479.8 L844.2 466.2 L845.8 495.8 L849.2 491.8 L851.4 504.7" stroke="#f7a35c" stroke-width="1" fill="none" stroke-linejoin="round"/><path d="M838.0 516.5 L842.0 503.6 L846.0 487.6 L849.0 479.6 L851.9 451.7 L855.3 465.7 L857.3 433.8 L859.9 443.7 L861.5 446.7 L862.5 430.8 L864.3 405.8 L866.3 431.8 L869.3 388.9 L870.3 423.8 L871.5 404.8 L872.9 452.7 L874.3 429.8 L875.9 417.8 L878.9 408.8 L880.9 443.7 L883.9 430.8 L885.9 457.7 L887.5 439.7 L889.4 491.6 L892.8 479.6 L894.8 488.6 L896.8 483.6" stroke="#434348" stroke-width="1" fill="none" stroke-linejoin="round"/><path d="M840.4 485.6 L843.6 499.6 L845.0 477.6 L847.0 517.5 L849.5 483.6 L850.5 488.6 L853.9 457.7 L855.9 433.8 L857.9 441.7 L860.9 411.8 L862.9 439.7 L864.3 417.8 L867.9 370.9 L869.5 417.8 L870.9 431.8 L874.3 400.8 L876.5 414.8 L880.3 435.8 L883.5 493.6 L885.5 476.6 L887.8 479.6 L889.8 487.6 L891.8 504.6 L893.8 500.6" stroke="#8085e9" stroke-width="1" fill="none" stroke-linejoin="round"/><path d="M881.5 515.5 L883.9 519.5 L886.3 497.6 L887.8 503.6 L889.8 471.7 L891.8 467.7 L893.8 450.7 L896.2 472.7 L897.8 438.7 L900.8 437.7 L902.8 457.7 L904.2 436.7 L905.4 471.7 L907.8 443.7 L910.8 448.7 L912.2 459.7 L915.4 419.8 L917.4 459.7 L918.8 437.7 L921.4 453.7 L922.8 424.8 L924.2 489.6 L925.8 473.7 L928.7 493.6 L930.7 484.6 L933.7 491.6 L935.7 501.6 L936.7 495.6" stroke="#90ed7d" stroke-width="1" fill="none" stroke-linejoin="round"/><path d="M918.8 504.6 L922.8 501.6 L927.7 475.6 L931.7 448.7 L934.7 463.7 L936.7 419.8 L939.3 461.7 L942.7 428.8 L945.3 441.7 L947.7 439.7 L948.7 417.8 L950.3 441.7 L951.7 407.8 L954.7 465.7 L956.7 448.7 L958.7 479.6 L960.7 469.7 L963.7 471.7 L967.6 489.6 L969.6 465.7 L972.0 487.6 L976.6 515.5 L978.0 501.6" stroke="#f15c80" stroke-width="1" fill="none" stroke-linejoin="round"/><path d="M1000 403.5 H1016" stroke="#7cb5ec" stroke-width="2" opacity=".6"/><text x="1021" y="407.5" font-size="12" letter-spacing="0.15" font-weight="bold" fill="#333" font-family="Liberation Sans">QC1</text><path d="M1000 421.5 H1016" stroke="#434348" stroke-width="2" opacity=".6"/><text x="1021" y="425.5" font-size="12" letter-spacing="0.15" font-weight="bold" fill="#333" font-family="Liberation Sans">QC2</text><path d="M1000 439.5 H1016" stroke="#90ed7d" stroke-width="2" opacity=".6"/><text x="1021" y="443.5" font-size="12" letter-spacing="0.15" font-weight="bold" fill="#333" font-family="Liberation Sans">QC3</text><path d="M1000 457.5 H1016" stroke="#f7a35c" stroke-width="2" opacity=".6"/><text x="1021" y="461.5" font-size="12" letter-spacing="0.15" font-weight="bold" fill="#333" font-family="Liberation Sans">QC4</text><path d="M1000 475.5 H1016" stroke="#8085e9" stroke-width="2" opacity=".6"/><text x="1021" y="479.5" font-size="12" letter-spacing="0.15" font-weight="bold" fill="#333" font-family="Liberation Sans">QC5</text><path d="M1000 493.5 H1016" stroke="#f15c80" stroke-width="2" opacity=".6"/><text x="1021" y="497.5" font-size="12" letter-spacing="0.15" font-weight="bold" fill="#333" font-family="Liberation Sans">QC6</text><path d="M1037 331.5 H1051" stroke="#666" stroke-width="3" stroke-linecap="round"/><path d="M1037 336.5 H1051" stroke="#666" stroke-width="3" stroke-linecap="round"/><path d="M1037 341.5 H1051" stroke="#666" stroke-width="3" stroke-linecap="round"/><text x="1054" y="584" text-anchor="end" font-size="9" letter-spacing="0.5" fill="#909090" font-family="Liberation Sans">Highcharts.com</text></svg>
<svg style="position:absolute;left:1110px;top:312px;overflow:visible" width="268" height="293" viewBox="1110 312 268 293"><path d="M1212 324.5 H1320" stroke="#d8d8d8" stroke-width="1"/><text x="1197" y="327.5" text-anchor="end" font-size="11" letter-spacing="0.9" fill="#606060" font-family="Liberation Sans">6.00e+6</text><path d="M1212 368.5 H1320" stroke="#d8d8d8" stroke-width="1"/><text x="1197" y="371.5" text-anchor="end" font-size="11" letter-spacing="0.9" fill="#606060" font-family="Liberation Sans">4.00e+6</text><path d="M1212 413.5 H1320" stroke="#d8d8d8" stroke-width="1"/><text x="1197" y="416.5" text-anchor="end" font-size="11" letter-spacing="0.9" fill="#606060" font-family="Liberation Sans">2.00e+6</text><text x="1197" y="460.5" text-anchor="end" font-size="11" letter-spacing="0.9" fill="#606060" font-family="Liberation Sans">0.00e+0</text><path d="M1211 457.5 H1321 M1211.5 457 V467 M1265.5 457 V467 M1320.5 457 V467" stroke="#c0d0e0" stroke-width="1" fill="none"/><text transform="translate(1142 391) rotate(-90)" text-anchor="middle" font-size="12" letter-spacing="0.64" fill="#606060" font-family="Liberation Sans">Abundance distributions</text><text transform="translate(1242 473) rotate(-45)" text-anchor="end" font-size="11" letter-spacing="0.55" fill="#606060" font-family="Liberation Sans">Group batch4_10FT</text><text transform="translate(1296 472) rotate(-45)" text-anchor="end" font-size="11" letter-spacing="0.55" fill="#606060" font-family="Liberation Sans">Group batch4_1FT</text><text x="1266" y="568" text-anchor="middle" font-size="12" letter-spacing="0.5" fill="#606060" font-family="Liberation Sans">Group No.</text><text x="1320" y="584" text-anchor="end" font-size="9" letter-spacing="0.5" fill="#909090" font-family="Liberation Sans">Highcharts.com</text><path d="M1212 380.5 H1320" stroke="#e00000" stroke-width="1.3"/><path d="M1225 383 H1252" stroke="#7cb5ec" stroke-width="2.5"/><circle cx="1239" cy="369" r="3.6" fill="#fff" stroke="#7cb5ec" stroke-width="1.2"/><circle cx="1239" cy="375" r="3.6" fill="#fff" stroke="#7cb5ec" stroke-width="1.2"/><circle cx="1239" cy="406" r="3.6" fill="#fff" stroke="#7cb5ec" stroke-width="1.2"/><path d="M1279 376 H1306" stroke="#7cb5ec" stroke-width="2.5"/><circle cx="1293" cy="371" r="3.6" fill="#fff" stroke="#7cb5ec" stroke-width="1.2"/><circle cx="1293" cy="379" r="3.6" fill="#fff" stroke="#7cb5ec" stroke-width="1.2"/><path d="M1303 331.5 H1316" stroke="#666" stroke-width="3" stroke-linecap="round"/><path d="M1303 336.5 H1316" stroke="#666" stroke-width="3" stroke-linecap="round"/><path d="M1303 341.5 H1316" stroke="#666" stroke-width="3" stroke-linecap="round"/></svg>
<div style="position:absolute;left:16px;top:626px;width:1500px;height:31px;background:#3a8fd4"></div>
<div style="position:absolute;left:16px;top:657px;width:1500px;height:25px;background:#eaeaea"></div>
<div style="position:absolute;left:16px;top:626px;width:1500px;height:1px;background:#828282"></div>
<div style="position:absolute;left:16px;top:657px;width:1500px;height:1px;background:#828282"></div>
<div style="position:absolute;left:16px;top:682px;width:1500px;height:1px;background:#828282"></div>
<div style="position:absolute;left:16px;top:626px;width:1px;height:57px;background:#828282"></div>
<div style="position:absolute;left:98px;top:626px;width:1px;height:57px;background:#828282"></div>
<div style="position:absolute;left:682px;top:626px;width:1px;height:57px;background:#828282"></div>
<div style="position:absolute;left:848px;top:626px;width:1px;height:57px;background:#828282"></div>
<div style="position:absolute;left:1181px;top:626px;width:1px;height:57px;background:#828282"></div>
<div style="position:absolute;left:1515px;top:626px;width:1px;height:57px;background:#828282"></div>
<div class="c" style="left:17px;top:627px;width:81px;height:30px;justify-content:center;font-size:21px;font-weight:bold;color:#fff">#</div>
<div class="c" style="left:17px;top:658px;width:81px;height:24px;justify-content:center;font-size:16px;color:#333">2</div>
<div class="c" style="left:99px;top:627px;width:583px;height:30px;justify-content:center;font-size:21px;font-weight:bold;color:#fff">Peptide Sequence</div>
<div class="c" style="left:99px;top:658px;width:583px;height:24px;justify-content:center;font-size:16px;color:#333">YIISGSDDGNVR</div>
<div class="c" style="left:683px;top:627px;width:165px;height:30px;justify-content:center;font-size:21px;font-weight:bold;color:#fff">Is specific</div>
<div class="c" style="left:683px;top:658px;width:165px;height:24px;justify-content:center;font-size:16px;color:#333"></div>
<div class="c" style="left:849px;top:627px;width:332px;height:30px;justify-content:center;font-size:21px;font-weight:bold;color:#fff">Ratio(s)</div>
<div class="c" style="left:849px;top:658px;width:332px;height:24px;justify-content:center;font-size:16px;color:#333">1.08</div>
<div class="c" style="left:1182px;top:627px;width:333px;height:30px;justify-content:center;font-size:21px;font-weight:bold;color:#fff">Profile analysis</div>
<div class="c" style="left:1182px;top:658px;width:333px;height:24px;justify-content:center;font-size:16px;color:#333">~</div>
<div style="position:absolute;left:16px;top:683px;width:1500px;height:0;border-top:1px dotted #000"></div>
<div class="c" style="left:17px;top:684px;width:66px;height:36px;justify-content:center;font-size:13px;font-weight:bold;color:#222;line-height:14px">Selection</div>
<div class="c" style="left:84px;top:684px;width:81px;height:36px;justify-content:center;font-size:13px;font-weight:bold;color:#222;line-height:14px">Condition</div>
<div class="c" style="left:166px;top:684px;width:122px;height:36px;justify-content:center;font-size:13px;font-weight:bold;color:#222;line-height:14px">File</div>
<div class="c" style="left:289px;top:684px;width:59px;height:36px;justify-content:center;font-size:13px;font-weight:bold;color:#222;line-height:14px">m/z</div>
<div class="c" style="left:349px;top:684px;width:22px;height:36px;justify-content:center;font-size:13px;font-weight:bold;color:#222;line-height:14px">Z</div>
<div class="c" style="left:372px;top:684px;width:42px;height:36px;justify-content:center;font-size:13px;font-weight:bold;color:#222;line-height:14px">Score</div>
<div class="c" style="left:415px;top:684px;width:38px;height:36px;justify-content:center;font-size:13px;font-weight:bold;color:#222;line-height:14px">Ret.<br>time</div>
<div class="c" style="left:454px;top:684px;width:61px;height:36px;justify-content:center;font-size:13px;font-weight:bold;color:#222;line-height:14px">Adjusted<br>RT</div>
<div class="c" style="left:516px;top:684px;width:59px;height:36px;justify-content:center;font-size:13px;font-weight:bold;color:#222;line-height:14px">Duration</div>
<div class="c" style="left:576px;top:684px;width:57px;height:36px;justify-content:center;font-size:13px;font-weight:bold;color:#222;line-height:14px">#MS/MS</div>
<div class="c" style="left:634px;top:684px;width:475px;height:36px;justify-content:center;font-size:13px;font-weight:bold;color:#222;line-height:14px"><span style="color:#0000ee;text-decoration:underline;font-weight:normal">RAW XIC</span></div>
<div class="c" style="left:1110px;top:684px;width:268px;height:36px;justify-content:center;font-size:13px;font-weight:bold;color:#222;line-height:14px">Quant Profile</div>
<div class="c" style="left:1379px;top:684px;width:59px;height:36px;justify-content:center;font-size:13px;font-weight:bold;color:#222;line-height:14px">Raw Ab.</div>
<div class="c" style="left:1439px;top:684px;width:76px;height:36px;justify-content:center;font-size:13px;font-weight:bold;color:#222;line-height:14px">Abundance</div>
<div style="position:absolute;left:16px;top:684px;width:0;height:37px;border-left:1px dotted #6a6a6a"></div>
<div style="position:absolute;left:83px;top:684px;width:0;height:37px;border-left:1px dotted #6a6a6a"></div>
<div style="position:absolute;left:165px;top:684px;width:0;height:37px;border-left:1px dotted #6a6a6a"></div>
<div style="position:absolute;left:288px;top:684px;width:0;height:37px;border-left:1px dotted #6a6a6a"></div>
<div style="position:absolute;left:348px;top:684px;width:0;height:37px;border-left:1px dotted #6a6a6a"></div>
<div style="position:absolute;left:371px;top:684px;width:0;height:37px;border-left:1px dotted #6a6a6a"></div>
<div style="position:absolute;left:414px;top:684px;width:0;height:37px;border-left:1px dotted #6a6a6a"></div>
<div style="position:absolute;left:453px;top:684px;width:0;height:37px;border-left:1px dotted #6a6a6a"></div>
<div style="position:absolute;left:515px;top:684px;width:0;height:37px;border-left:1px dotted #6a6a6a"></div>
<div style="position:absolute;left:575px;top:684px;width:0;height:37px;border-left:1px dotted #6a6a6a"></div>
<div style="position:absolute;left:633px;top:684px;width:0;height:37px;border-left:1px dotted #6a6a6a"></div>
<div style="position:absolute;left:1109px;top:684px;width:0;height:37px;border-left:1px dotted #6a6a6a"></div>
<div style="position:absolute;left:1378px;top:684px;width:0;height:37px;border-left:1px dotted #6a6a6a"></div>
<div style="position:absolute;left:1438px;top:684px;width:0;height:37px;border-left:1px dotted #6a6a6a"></div>
<div style="position:absolute;left:1515px;top:684px;width:0;height:37px;border-left:1px dotted #6a6a6a"></div>
<div style="position:absolute;left:16px;top:720px;width:1500px;height:0;border-top:1px dotted #6a6a6a"></div>
<div class="c" style="left:84px;top:720px;width:81px;height:36px;justify-content:center;font-size:13px;color:#333;line-height:15px">Group<br>batch4_1FT</div>
<div class="c" style="left:166px;top:720px;width:122px;height:36px;justify-content:center;font-size:13px;color:#333;line-height:15px">QEKAC141027_29</div>
<div class="c" style="left:289px;top:720px;width:59px;height:36px;justify-content:center;font-size:13px;color:#333;line-height:15px">648.3148</div>
<div class="c" style="left:372px;top:720px;width:42px;height:36px;justify-content:center;font-size:13px;color:#333;line-height:15px">62.9</div>
<div class="c" style="left:415px;top:720px;width:38px;height:36px;justify-content:center;font-size:13px;color:#333;line-height:15px">69.64</div>
<div class="c" style="left:454px;top:720px;width:61px;height:36px;justify-content:center;font-size:13px;color:#333;line-height:15px">69.64</div>
<div class="c" style="left:516px;top:720px;width:59px;height:36px;justify-content:center;font-size:13px;color:#333;line-height:15px">0.51</div>
<div class="c" style="left:576px;top:720px;width:57px;height:36px;justify-content:center;font-size:13px;color:#333;line-height:15px">1</div>
<div class="c" style="left:1379px;top:720px;width:59px;height:36px;justify-content:center;font-size:13px;color:#333;line-height:15px">4.22e+06</div>
<div class="c" style="left:1439px;top:720px;width:76px;height:36px;justify-content:center;font-size:13px;color:#333;line-height:15px">3.65e+06</div>
<div style="position:absolute;left:83px;top:769px;width:265px;height:0;border-top:1px dotted #6a6a6a"></div>
<div style="position:absolute;left:371px;top:769px;width:262px;height:0;border-top:1px dotted #6a6a6a"></div>
<div style="position:absolute;left:1378px;top:769px;width:137px;height:0;border-top:1px dotted #6a6a6a"></div>
<div style="position:absolute;left:83px;top:721px;width:0;height:48px;border-left:1px dotted #6a6a6a"></div>
<div style="position:absolute;left:348px;top:721px;width:0;height:48px;border-left:1px dotted #6a6a6a"></div>
<div style="position:absolute;left:371px;top:721px;width:0;height:48px;border-left:1px dotted #6a6a6a"></div>
<div style="position:absolute;left:633px;top:721px;width:0;height:48px;border-left:1px dotted #6a6a6a"></div>
<div style="position:absolute;left:1378px;top:721px;width:0;height:48px;border-left:1px dotted #6a6a6a"></div>
<div style="position:absolute;left:165px;top:721px;width:0;height:48px;border-left:1px dotted #6a6a6a"></div>
<div style="position:absolute;left:288px;top:721px;width:0;height:48px;border-left:1px dotted #6a6a6a"></div>
<div style="position:absolute;left:414px;top:721px;width:0;height:48px;border-left:1px dotted #6a6a6a"></div>
<div style="position:absolute;left:453px;top:721px;width:0;height:48px;border-left:1px dotted #6a6a6a"></div>
<div style="position:absolute;left:515px;top:721px;width:0;height:48px;border-left:1px dotted #6a6a6a"></div>
<div style="position:absolute;left:575px;top:721px;width:0;height:48px;border-left:1px dotted #6a6a6a"></div>
<div style="position:absolute;left:1438px;top:721px;width:0;height:48px;border-left:1px dotted #6a6a6a"></div>
<div class="c" style="left:84px;top:769px;width:81px;height:36px;justify-content:center;font-size:13px;color:#333;line-height:15px">Group<br>batch4_1FT</div>
<div class="c" style="left:166px;top:769px;width:122px;height:36px;justify-content:center;font-size:13px;color:#333;line-height:15px">QEKAC141027_76</div>
<div class="c" style="left:289px;top:769px;width:59px;height:36px;justify-content:center;font-size:13px;color:#333;line-height:15px">648.3143</div>
<div class="c" style="left:372px;top:769px;width:42px;height:36px;justify-content:center;font-size:13px;color:#333;line-height:15px">50.7</div>
<div class="c" style="left:415px;top:769px;width:38px;height:36px;justify-content:center;font-size:13px;color:#333;line-height:15px">70.34</div>
<div class="c" style="left:454px;top:769px;width:61px;height:36px;justify-content:center;font-size:13px;color:#333;line-height:15px">70.34</div>
<div class="c" style="left:516px;top:769px;width:59px;height:36px;justify-content:center;font-size:13px;color:#333;line-height:15px">0.51</div>
<div class="c" style="left:576px;top:769px;width:57px;height:36px;justify-content:center;font-size:13px;color:#333;line-height:15px">1</div>
<div class="c" style="left:1379px;top:769px;width:59px;height:36px;justify-content:center;font-size:13px;color:#333;line-height:15px">3.53e+06</div>
<div class="c" style="left:1439px;top:769px;width:76px;height:36px;justify-content:center;font-size:13px;color:#333;line-height:15px">3.60e+06</div>
<div style="position:absolute;left:83px;top:818px;width:265px;height:0;border-top:1px dotted #6a6a6a"></div>
<div style="position:absolute;left:371px;top:818px;width:262px;height:0;border-top:1px dotted #6a6a6a"></div>
<div style="position:absolute;left:1378px;top:818px;width:137px;height:0;border-top:1px dotted #6a6a6a"></div>
<div style="position:absolute;left:83px;top:770px;width:1px;height:48px;background:#828282"></div>
<div style="position:absolute;left:348px;top:770px;width:1px;height:48px;background:#828282"></div>
<div style="position:absolute;left:371px;top:770px;width:1px;height:48px;background:#828282"></div>
<div style="position:absolute;left:633px;top:770px;width:1px;height:48px;background:#828282"></div>
<div style="position:absolute;left:1378px;top:770px;width:1px;height:48px;background:#828282"></div>
<div style="position:absolute;left:165px;top:770px;width:0;height:48px;border-left:1px dotted #6a6a6a"></div>
<div style="position:absolute;left:288px;top:770px;width:0;height:48px;border-left:1px dotted #6a6a6a"></div>
<div style="position:absolute;left:414px;top:770px;width:0;height:48px;border-left:1px dotted #6a6a6a"></div>
<div style="position:absolute;left:453px;top:770px;width:0;height:48px;border-left:1px dotted #6a6a6a"></div>
<div style="position:absolute;left:515px;top:770px;width:0;height:48px;border-left:1px dotted #6a6a6a"></div>
<div style="position:absolute;left:575px;top:770px;width:0;height:48px;border-left:1px dotted #6a6a6a"></div>
<div style="position:absolute;left:1438px;top:770px;width:0;height:48px;border-left:1px dotted #6a6a6a"></div>
<div class="c" style="left:84px;top:818px;width:81px;height:36px;justify-content:center;font-size:13px;color:#333;line-height:15px">Group<br>batch4_1FT</div>
<div class="c" style="left:166px;top:818px;width:122px;height:36px;justify-content:center;font-size:13px;color:#333;line-height:15px">QEKAC141027_125</div>
<div class="c" style="left:289px;top:818px;width:59px;height:36px;justify-content:center;font-size:13px;color:#333;line-height:15px">648.3145</div>
<div class="c" style="left:372px;top:818px;width:42px;height:36px;justify-content:center;font-size:13px;color:#333;line-height:15px">58.9</div>
<div class="c" style="left:415px;top:818px;width:38px;height:36px;justify-content:center;font-size:13px;color:#333;line-height:15px">70.36</div>
<div class="c" style="left:454px;top:818px;width:61px;height:36px;justify-content:center;font-size:13px;color:#333;line-height:15px">70.36</div>
<div class="c" style="left:516px;top:818px;width:59px;height:36px;justify-content:center;font-size:13px;color:#333;line-height:15px">0.62</div>
<div class="c" style="left:576px;top:818px;width:57px;height:36px;justify-content:center;font-size:13px;color:#333;line-height:15px">1</div>
<div class="c" style="left:1379px;top:818px;width:59px;height:36px;justify-content:center;font-size:13px;color:#333;line-height:15px">3.03e+06</div>
<div class="c" style="left:1439px;top:818px;width:76px;height:36px;justify-content:center;font-size:13px;color:#333;line-height:15px">3.67e+06</div>
<div style="position:absolute;left:83px;top:867px;width:265px;height:0;border-top:1px dotted #6a6a6a"></div>
<div style="position:absolute;left:371px;top:867px;width:262px;height:0;border-top:1px dotted #6a6a6a"></div>
<div style="position:absolute;left:1378px;top:867px;width:137px;height:0;border-top:1px dotted #6a6a6a"></div>
<div style="position:absolute;left:83px;top:819px;width:0;height:48px;border-left:1px dotted #6a6a6a"></div>
<div style="position:absolute;left:348px;top:819px;width:0;height:48px;border-left:1px dotted #6a6a6a"></div>
<div style="position:absolute;left:371px;top:819px;width:0;height:48px;border-left:1px dotted #6a6a6a"></div>
<div style="position:absolute;left:633px;top:819px;width:0;height:48px;border-left:1px dotted #6a6a6a"></div>
<div style="position:absolute;left:1378px;top:819px;width:0;height:48px;border-left:1px dotted #6a6a6a"></div>
<div style="position:absolute;left:165px;top:819px;width:0;height:48px;border-left:1px dotted #6a6a6a"></div>
<div style="position:absolute;left:288px;top:819px;width:0;height:48px;border-left:1px dotted #6a6a6a"></div>
<div style="position:absolute;left:414px;top:819px;width:0;height:48px;border-left:1px dotted #6a6a6a"></div>
<div style="position:absolute;left:453px;top:819px;width:0;height:48px;border-left:1px dotted #6a6a6a"></div>
<div style="position:absolute;left:515px;top:819px;width:0;height:48px;border-left:1px dotted #6a6a6a"></div>
<div style="position:absolute;left:575px;top:819px;width:0;height:48px;border-left:1px dotted #6a6a6a"></div>
<div style="position:absolute;left:1438px;top:819px;width:0;height:48px;border-left:1px dotted #6a6a6a"></div>
<div class="c" style="left:84px;top:867px;width:81px;height:36px;justify-content:center;font-size:13px;color:#333;line-height:15px">Group<br>batch4_10FT</div>
<div class="c" style="left:166px;top:867px;width:122px;height:36px;justify-content:center;font-size:13px;color:#333;line-height:15px">QEKAC141027_33</div>
<div class="c" style="left:289px;top:867px;width:59px;height:36px;justify-content:center;font-size:13px;color:#333;line-height:15px">648.3145</div>
<div class="c" style="left:372px;top:867px;width:42px;height:36px;justify-content:center;font-size:13px;color:#333;line-height:15px">44.3</div>
<div class="c" style="left:415px;top:867px;width:38px;height:36px;justify-content:center;font-size:13px;color:#333;line-height:15px">69.98</div>
<div class="c" style="left:454px;top:867px;width:61px;height:36px;justify-content:center;font-size:13px;color:#333;line-height:15px">69.98</div>
<div class="c" style="left:516px;top:867px;width:59px;height:36px;justify-content:center;font-size:13px;color:#333;line-height:15px">0.49</div>
<div class="c" style="left:576px;top:867px;width:57px;height:36px;justify-content:center;font-size:13px;color:#333;line-height:15px">1</div>
<div class="c" style="left:1379px;top:867px;width:59px;height:36px;justify-content:center;font-size:13px;color:#333;line-height:15px">4.71e+06</div>
<div class="c" style="left:1439px;top:867px;width:76px;height:36px;justify-content:center;font-size:13px;color:#333;line-height:15px">4.19e+06</div>
<div style="position:absolute;left:83px;top:916px;width:265px;height:0;border-top:1px dotted #6a6a6a"></div>
<div style="position:absolute;left:371px;top:916px;width:262px;height:0;border-top:1px dotted #6a6a6a"></div>
<div style="position:absolute;left:1378px;top:916px;width:137px;height:0;border-top:1px dotted #6a6a6a"></div>
<div style="position:absolute;left:83px;top:868px;width:1px;height:48px;background:#828282"></div>
<div style="position:absolute;left:348px;top:868px;width:1px;height:48px;background:#828282"></div>
<div style="position:absolute;left:371px;top:868px;width:1px;height:48px;background:#828282"></div>
<div style="position:absolute;left:633px;top:868px;width:1px;height:48px;background:#828282"></div>
<div style="position:absolute;left:1378px;top:868px;width:1px;height:48px;background:#828282"></div>
<div style="position:absolute;left:165px;top:868px;width:0;height:48px;border-left:1px dotted #6a6a6a"></div>
<div style="position:absolute;left:288px;top:868px;width:0;height:48px;border-left:1px dotted #6a6a6a"></div>
<div style="position:absolute;left:414px;top:868px;width:0;height:48px;border-left:1px dotted #6a6a6a"></div>
<div style="position:absolute;left:453px;top:868px;width:0;height:48px;border-left:1px dotted #6a6a6a"></div>
<div style="position:absolute;left:515px;top:868px;width:0;height:48px;border-left:1px dotted #6a6a6a"></div>
<div style="position:absolute;left:575px;top:868px;width:0;height:48px;border-left:1px dotted #6a6a6a"></div>
<div style="position:absolute;left:1438px;top:868px;width:0;height:48px;border-left:1px dotted #6a6a6a"></div>
<div class="c" style="left:84px;top:916px;width:81px;height:36px;justify-content:center;font-size:13px;color:#333;line-height:15px">Group<br>batch4_10FT</div>
<div class="c" style="left:166px;top:916px;width:122px;height:36px;justify-content:center;font-size:13px;color:#333;line-height:15px">QEKAC141027_80</div>
<div class="c" style="left:289px;top:916px;width:59px;height:36px;justify-content:center;font-size:13px;color:#333;line-height:15px">648.3143</div>
<div class="c" style="left:372px;top:916px;width:42px;height:36px;justify-content:center;font-size:13px;color:#333;line-height:15px">50.4</div>
<div class="c" style="left:415px;top:916px;width:38px;height:36px;justify-content:center;font-size:13px;color:#333;line-height:15px">70.27</div>
<div class="c" style="left:454px;top:916px;width:61px;height:36px;justify-content:center;font-size:13px;color:#333;line-height:15px">70.27</div>
<div class="c" style="left:516px;top:916px;width:59px;height:36px;justify-content:center;font-size:13px;color:#333;line-height:15px">0.47</div>
<div class="c" style="left:576px;top:916px;width:57px;height:36px;justify-content:center;font-size:13px;color:#333;line-height:15px">1</div>
<div class="c" style="left:1379px;top:916px;width:59px;height:36px;justify-content:center;font-size:13px;color:#333;line-height:15px">3.97e+06</div>
<div class="c" style="left:1439px;top:916px;width:76px;height:36px;justify-content:center;font-size:13px;color:#333;line-height:15px">3.97e+06</div>
<div style="position:absolute;left:83px;top:965px;width:265px;height:0;border-top:1px dotted #6a6a6a"></div>
<div style="position:absolute;left:371px;top:965px;width:262px;height:0;border-top:1px dotted #6a6a6a"></div>
<div style="position:absolute;left:1378px;top:965px;width:137px;height:0;border-top:1px dotted #6a6a6a"></div>
<div style="position:absolute;left:83px;top:917px;width:0;height:48px;border-left:1px dotted #6a6a6a"></div>
<div style="position:absolute;left:348px;top:917px;width:0;height:48px;border-left:1px dotted #6a6a6a"></div>
<div style="position:absolute;left:371px;top:917px;width:0;height:48px;border-left:1px dotted #6a6a6a"></div>
<div style="position:absolute;left:633px;top:917px;width:0;height:48px;border-left:1px dotted #6a6a6a"></div>
<div style="position:absolute;left:1378px;top:917px;width:0;height:48px;border-left:1px dotted #6a6a6a"></div>
<div style="position:absolute;left:165px;top:917px;width:0;height:48px;border-left:1px dotted #6a6a6a"></div>
<div style="position:absolute;left:288px;top:917px;width:0;height:48px;border-left:1px dotted #6a6a6a"></div>
<div style="position:absolute;left:414px;top:917px;width:0;height:48px;border-left:1px dotted #6a6a6a"></div>
<div style="position:absolute;left:453px;top:917px;width:0;height:48px;border-left:1px dotted #6a6a6a"></div>
<div style="position:absolute;left:515px;top:917px;width:0;height:48px;border-left:1px dotted #6a6a6a"></div>
<div style="position:absolute;left:575px;top:917px;width:0;height:48px;border-left:1px dotted #6a6a6a"></div>
<div style="position:absolute;left:1438px;top:917px;width:0;height:48px;border-left:1px dotted #6a6a6a"></div>
<div class="c" style="left:84px;top:965px;width:81px;height:36px;justify-content:center;font-size:13px;color:#333;line-height:15px">Group<br>batch4_10FT</div>
<div class="c" style="left:166px;top:965px;width:122px;height:36px;justify-content:center;font-size:13px;color:#333;line-height:15px">QEKAC141027_129</div>
<div class="c" style="left:289px;top:965px;width:59px;height:36px;justify-content:center;font-size:13px;color:#333;line-height:15px">648.3141</div>
<div class="c" style="left:372px;top:965px;width:42px;height:36px;justify-content:center;font-size:13px;color:#333;line-height:15px">51.0</div>
<div class="c" style="left:415px;top:965px;width:38px;height:36px;justify-content:center;font-size:13px;color:#333;line-height:15px">70.40</div>
<div class="c" style="left:454px;top:965px;width:61px;height:36px;justify-content:center;font-size:13px;color:#333;line-height:15px">70.40</div>
<div class="c" style="left:516px;top:965px;width:59px;height:36px;justify-content:center;font-size:13px;color:#333;line-height:15px">0.45</div>
<div class="c" style="left:576px;top:965px;width:57px;height:36px;justify-content:center;font-size:13px;color:#333;line-height:15px">1</div>
<div class="c" style="left:1379px;top:965px;width:59px;height:36px;justify-content:center;font-size:13px;color:#333;line-height:15px">3.50e+06</div>
<div class="c" style="left:1439px;top:965px;width:76px;height:36px;justify-content:center;font-size:13px;color:#333;line-height:15px">3.70e+06</div>
<div style="position:absolute;left:83px;top:1014px;width:265px;height:0;border-top:1px dotted #6a6a6a"></div>
<div style="position:absolute;left:371px;top:1014px;width:262px;height:0;border-top:1px dotted #6a6a6a"></div>
<div style="position:absolute;left:1378px;top:1014px;width:137px;height:0;border-top:1px dotted #6a6a6a"></div>
<div style="position:absolute;left:83px;top:966px;width:1px;height:48px;background:#828282"></div>
<div style="position:absolute;left:348px;top:966px;width:1px;height:48px;background:#828282"></div>
<div style="position:absolute;left:371px;top:966px;width:1px;height:48px;background:#828282"></div>
<div style="position:absolute;left:633px;top:966px;width:1px;height:48px;background:#828282"></div>
<div style="position:absolute;left:1378px;top:966px;width:1px;height:48px;background:#828282"></div>
<div style="position:absolute;left:165px;top:966px;width:0;height:48px;border-left:1px dotted #6a6a6a"></div>
<div style="position:absolute;left:288px;top:966px;width:0;height:48px;border-left:1px dotted #6a6a6a"></div>
<div style="position:absolute;left:414px;top:966px;width:0;height:48px;border-left:1px dotted #6a6a6a"></div>
<div style="position:absolute;left:453px;top:966px;width:0;height:48px;border-left:1px dotted #6a6a6a"></div>
<div style="position:absolute;left:515px;top:966px;width:0;height:48px;border-left:1px dotted #6a6a6a"></div>
<div style="position:absolute;left:575px;top:966px;width:0;height:48px;border-left:1px dotted #6a6a6a"></div>
<div style="position:absolute;left:1438px;top:966px;width:0;height:48px;border-left:1px dotted #6a6a6a"></div>
<div style="position:absolute;left:16px;top:721px;width:0;height:294px;border-left:1px dotted #6a6a6a"></div>
<div style="position:absolute;left:1515px;top:721px;width:0;height:294px;border-left:1px dotted #6a6a6a"></div>
<div style="position:absolute;left:1109px;top:721px;width:0;height:294px;border-left:1px dotted #6a6a6a"></div>
<div style="position:absolute;left:16px;top:1014px;width:67px;height:0;border-top:1px dotted #6a6a6a"></div>
<div style="position:absolute;left:348px;top:1014px;width:23px;height:0;border-top:1px dotted #6a6a6a"></div>
<div style="position:absolute;left:633px;top:1014px;width:745px;height:0;border-top:1px dotted #6a6a6a"></div>
<div class="c" style="left:17px;top:794px;width:66px;height:32px;justify-content:center;font-size:13px;color:#333;line-height:15px">Dataset<br>selection</div>
<svg style="position:absolute;left:41px;top:831px" width="15" height="13" viewBox="0 0 15 13"><ellipse cx="7" cy="12" rx="4" ry="1" fill="#000" opacity=".12"/><path d="M0.5 6.5 L3 4.5 L5.8 7.5 L12 0.8 L14.5 3 L5.8 11.5 Z" fill="#3cbc3c" stroke="#1f8f1f" stroke-width=".6"/><path d="M1.5 6.5 L3 5.3 L5.8 8.3 L12 1.8 L13.5 3" fill="none" stroke="#8fe88f" stroke-width=".8"/></svg>
<div class="c" style="left:17px;top:868px;width:66px;height:32px;justify-content:center;font-size:13px;color:#333;line-height:15px">Protein<br>selection</div>
<svg style="position:absolute;left:43px;top:905px" width="15" height="13" viewBox="0 0 15 13"><ellipse cx="7" cy="12" rx="4" ry="1" fill="#000" opacity=".12"/><path d="M0.5 6.5 L3 4.5 L5.8 7.5 L12 0.8 L14.5 3 L5.8 11.5 Z" fill="#3cbc3c" stroke="#1f8f1f" stroke-width=".6"/><path d="M1.5 6.5 L3 5.3 L5.8 8.3 L12 1.8 L13.5 3" fill="none" stroke="#8fe88f" stroke-width=".8"/></svg>
<div class="c" style="left:349px;top:853px;width:22px;height:16px;justify-content:center;font-size:13px;color:#333">2+</div>
<svg style="position:absolute;left:634px;top:721px;overflow:visible" width="474" height="293" viewBox="634 721 474 293"><path d="M736 733.5 H979" stroke="#d8d8d8" stroke-width="1"/><text x="721" y="737.0" text-anchor="end" font-size="11" letter-spacing="0.9" fill="#606060" font-family="Liberation Sans">4.00e+6</text><path d="M736 784.5 H979" stroke="#d8d8d8" stroke-width="1"/><text x="721" y="788.0" text-anchor="end" font-size="11" letter-spacing="0.9" fill="#606060" font-family="Liberation Sans">3.00e+6</text><path d="M736 835.5 H979" stroke="#d8d8d8" stroke-width="1"/><text x="721" y="839.0" text-anchor="end" font-size="11" letter-spacing="0.9" fill="#606060" font-family="Liberation Sans">2.00e+6</text><path d="M736 885.5 H979" stroke="#d8d8d8" stroke-width="1"/><text x="721" y="889.0" text-anchor="end" font-size="11" letter-spacing="0.9" fill="#606060" font-family="Liberation Sans">1.00e+6</text><text x="721" y="939.0" text-anchor="end" font-size="11" letter-spacing="0.9" fill="#606060" font-family="Liberation Sans">0.00e+0</text><path d="M736 935.5 H979" stroke="#c0d0e0" stroke-width="1"/><path d="M834.5 935 V945" stroke="#c0d0e0" stroke-width="1"/><text x="834.5" y="954" text-anchor="middle" font-size="11" fill="#606060" font-family="Liberation Sans">70</text><text x="857" y="977" text-anchor="middle" font-size="12" letter-spacing="0.55" fill="#606060" font-family="Liberation Sans">Time (min)</text><text transform="translate(665 834.0) rotate(-90)" text-anchor="middle" font-size="12" letter-spacing="0.5" fill="#606060" font-family="Liberation Sans">MS intensity</text><path d="M738.6 926.2 L741.6 926.2 L744.3 899.5 L745.7 912.9 L748.8 891.4 L750.5 900.4 L751.8 884.3 L754.1 878.9 L756.2 875.4 L758.0 885.2 L760.7 860.2 L762.5 861.1 L765.4 829.8 L768.4 841.4 L770.7 832.5 L772.5 833.4 L774.3 838.8 L776.1 832.5 L777.3 833.4 L780.4 809.3 L780.9 848.6 L782.1 850.4 L783.2 837.9 L785.4 828.9 L787.5 853.9 L789.5 826.2 L792.5 864.6 L794.3 867.3 L797.0 853.0 L799.6 883.4 L802.9 857.5 L806.4 901.2 L810.4 891.4 L813.0 924.5 L815.4 904.8" stroke="#7cb5ec" stroke-width="1" fill="none" stroke-linejoin="round"/><path d="M802.9 913.8 L805.9 923.6 L809.5 909.3 L812.1 897.7 L813.9 904.8 L817.1 893.2 L819.3 880.7 L822.5 853.9 L825.5 880.7 L828.2 826.2 L830.0 875.4 L831.8 783.4 L833.2 846.8 L834.5 830.7 L836.2 834.3 L837.5 873.6 L840.7 838.8 L844.3 837.9 L847.0 836.1 L849.3 860.2 L851.4 853.9 L853.2 867.3 L855.9 816.4 L857.7 821.8 L859.5 877.1 L862.1 884.3 L864.8 877.1 L867.5 902.1 L870.7 880.7 L872.9 902.1 L877.3 903.0" stroke="#f7a35c" stroke-width="1" fill="none" stroke-linejoin="round"/><path d="M839.8 914.6 L841.6 925.4 L844.3 926.2 L847.0 911.1 L848.8 904.8 L850.0 915.5 L851.8 886.1 L854.1 892.3 L856.4 880.7 L858.6 879.8 L861.2 882.5 L862.1 903.0 L863.9 884.3 L865.7 861.1 L867.9 853.9 L870.2 859.3 L872.0 868.2 L874.6 846.8 L876.8 832.5 L878.6 850.4 L880.5 857.5 L882.7 848.6 L884.5 853.9 L885.9 828.9 L887.1 857.5 L888.9 846.8 L891.6 859.3 L894.3 858.4 L897.0 868.2 L899.6 891.4 L902.3 880.7 L904.6 891.4 L907.7 912.9 L910.0 884.3 L912.1 878.9 L913.9 895.0 L916.1 927.1" stroke="#434348" stroke-width="1" fill="none" stroke-linejoin="round"/><path d="M833.2 927.1 L838.9 907.5 L841.6 905.7 L843.4 903.9 L846.1 887.9 L847.0 880.7 L849.6 878.0 L851.4 884.3 L853.2 884.3 L854.6 850.4 L856.4 850.4 L858.2 870.0 L860.0 869.1 L861.8 884.3 L863.9 855.7 L866.6 848.6 L868.4 845.9 L870.2 855.7 L872.9 846.8 L875.0 825.4 L876.4 850.4 L878.2 830.7 L880.9 877.1 L882.7 862.9 L884.5 848.6 L886.2 883.4 L888.9 875.4 L891.6 880.7 L893.4 903.0 L896.1 887.9 L898.8 884.3 L901.1 912.9 L902.9 898.6 L905.0 912.9 L906.8 916.4" stroke="#8085e9" stroke-width="1" fill="none" stroke-linejoin="round"/><path d="M856.8 921.8 L863.6 928.0 L866.6 925.4 L868.4 918.2 L872.0 909.3 L873.8 903.9 L875.5 911.1 L877.9 887.9 L879.6 878.9 L881.8 896.8 L884.5 873.6 L887.1 853.9 L888.9 864.6 L890.7 889.6 L892.1 870.0 L894.3 882.5 L896.1 875.4 L898.8 866.4 L900.5 873.6 L904.1 855.7 L907.7 870.0 L909.5 886.1 L912.1 884.3 L914.8 887.9 L917.5 864.6 L919.3 866.4 L922.0 886.1 L924.6 902.1 L927.3 891.4 L930.9 893.2 L933.6 898.6 L936.2 907.5 L938.6 902.1 L940.7 907.5 L942.9 927.1 L945.2 918.2 L948.8 920.0 L950.5 927.1" stroke="#90ed7d" stroke-width="1" fill="none" stroke-linejoin="round"/><path d="M899.6 919.1 L905.0 916.4 L907.7 925.4 L910.4 909.3 L913.6 898.6 L915.4 918.2 L917.5 903.9 L920.2 898.6 L922.0 877.1 L923.8 902.1 L926.4 883.4 L929.1 877.1 L931.8 873.6 L933.9 839.6 L935.7 889.6 L938.0 873.6 L940.4 870.0 L941.6 862.9 L943.4 870.9 L946.1 852.1 L952.3 836.1 L955.0 877.1 L956.8 848.6 L958.2 891.4 L960.4 877.1 L963.0 873.6 L964.8 880.7 L967.5 875.4 L968.4 895.0 L970.2 873.6 L972.0 900.4 L974.6 893.2 L977.9 909.3" stroke="#f15c80" stroke-width="1" fill="none" stroke-linejoin="round"/><path d="M1000 812.5 H1016" stroke="#7cb5ec" stroke-width="2" opacity=".6"/><text x="1021" y="816.5" font-size="12" letter-spacing="0.15" font-weight="bold" fill="#333" font-family="Liberation Sans">QC1</text><path d="M1000 830.5 H1016" stroke="#434348" stroke-width="2" opacity=".6"/><text x="1021" y="834.5" font-size="12" letter-spacing="0.15" font-weight="bold" fill="#333" font-family="Liberation Sans">QC2</text><path d="M1000 848.5 H1016" stroke="#90ed7d" stroke-width="2" opacity=".6"/><text x="1021" y="852.5" font-size="12" letter-spacing="0.15" font-weight="bold" fill="#333" font-family="Liberation Sans">QC3</text><path d="M1000 866.5 H1016" stroke="#f7a35c" stroke-width="2" opacity=".6"/><text x="1021" y="870.5" font-size="12" letter-spacing="0.15" font-weight="bold" fill="#333" font-family="Liberation Sans">QC4</text><path d="M1000 884.5 H1016" stroke="#8085e9" stroke-width="2" opacity=".6"/><text x="1021" y="888.5" font-size="12" letter-spacing="0.15" font-weight="bold" fill="#333" font-family="Liberation Sans">QC5</text><path d="M1000 902.5 H1016" stroke="#f15c80" stroke-width="2" opacity=".6"/><text x="1021" y="906.5" font-size="12" letter-spacing="0.15" font-weight="bold" fill="#333" font-family="Liberation Sans">QC6</text><path d="M1037 740.5 H1051" stroke="#666" stroke-width="3" stroke-linecap="round"/><path d="M1037 745.5 H1051" stroke="#666" stroke-width="3" stroke-linecap="round"/><path d="M1037 750.5 H1051" stroke="#666" stroke-width="3" stroke-linecap="round"/><text x="1054" y="993" text-anchor="end" font-size="9" letter-spacing="0.5" fill="#909090" font-family="Liberation Sans">Highcharts.com</text></svg>
<svg style="position:absolute;left:1110px;top:721px;overflow:visible" width="268" height="293" viewBox="1110 721 268 293"><path d="M1212 733.5 H1320" stroke="#d8d8d8" stroke-width="1"/><text x="1197" y="736.5" text-anchor="end" font-size="11" letter-spacing="0.9" fill="#606060" font-family="Liberation Sans">6.00e+6</text><path d="M1212 778.5 H1320" stroke="#d8d8d8" stroke-width="1"/><text x="1197" y="781.5" text-anchor="end" font-size="11" letter-spacing="0.9" fill="#606060" font-family="Liberation Sans">4.00e+6</text><path d="M1212 822.5 H1320" stroke="#d8d8d8" stroke-width="1"/><text x="1197" y="825.5" text-anchor="end" font-size="11" letter-spacing="0.9" fill="#606060" font-family="Liberation Sans">2.00e+6</text><text x="1197" y="869.5" text-anchor="end" font-size="11" letter-spacing="0.9" fill="#606060" font-family="Liberation Sans">0.00e+0</text><path d="M1211 866.5 H1321 M1211.5 866 V876 M1265.5 866 V876 M1320.5 866 V876" stroke="#c0d0e0" stroke-width="1" fill="none"/><text transform="translate(1142 800) rotate(-90)" text-anchor="middle" font-size="12" letter-spacing="0.64" fill="#606060" font-family="Liberation Sans">Abundance distributions</text><text transform="translate(1242 882) rotate(-45)" text-anchor="end" font-size="11" letter-spacing="0.55" fill="#606060" font-family="Liberation Sans">Group batch4_10FT</text><text transform="translate(1296 881) rotate(-45)" text-anchor="end" font-size="11" letter-spacing="0.55" fill="#606060" font-family="Liberation Sans">Group batch4_1FT</text><text x="1266" y="977" text-anchor="middle" font-size="12" letter-spacing="0.5" fill="#606060" font-family="Liberation Sans">Group No.</text><text x="1320" y="993" text-anchor="end" font-size="9" letter-spacing="0.5" fill="#909090" font-family="Liberation Sans">Highcharts.com</text><path d="M1212 782.5 H1320" stroke="#e00000" stroke-width="1.3"/><path d="M1225 779 H1252" stroke="#7cb5ec" stroke-width="2.5"/><circle cx="1239" cy="774" r="3.6" fill="#fff" stroke="#7cb5ec" stroke-width="1.2"/><circle cx="1239" cy="779" r="3.6" fill="#fff" stroke="#7cb5ec" stroke-width="1.2"/><circle cx="1239" cy="784" r="3.6" fill="#fff" stroke="#7cb5ec" stroke-width="1.2"/><path d="M1279 786 H1306" stroke="#7cb5ec" stroke-width="2.5"/><circle cx="1293" cy="786" r="3.6" fill="#fff" stroke="#7cb5ec" stroke-width="1.2"/><path d="M1303 740.5 H1316" stroke="#666" stroke-width="3" stroke-linecap="round"/><path d="M1303 745.5 H1316" stroke="#666" stroke-width="3" stroke-linecap="round"/><path d="M1303 750.5 H1316" stroke="#666" stroke-width="3" stroke-linecap="round"/></svg>
</body></html>
